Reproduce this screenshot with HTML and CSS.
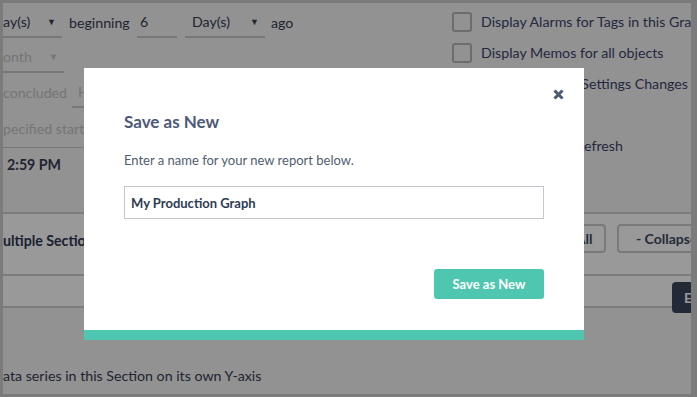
FILE: index.html
```html
<!DOCTYPE html>
<html lang="en">
<head>
  <meta charset="UTF-8">
  <title>Save as New</title>
  <link rel="stylesheet" href="styles.css">
</head>
<body>

  <div class="page">
    <div class="top">
      <div class="left">
        <div class="row row-first">
          <span class="select w-day1">ay(s) <i class="arrow">&#9660;</i></span>
          <span class="label l-begin">beginning</span>
          <span class="field w-num">6</span>
          <span class="select w-day2">Day(s) <i class="arrow">&#9660;</i></span>
          <span class="label l-ago">ago</span>
        </div>
        <div class="row faded">
          <span class="select w-month">onth <i class="arrow">&#9660;</i></span>
        </div>
        <div class="row faded">
          <span class="label">concluded</span>
          <span class="field w-hour">H</span>
        </div>
        <div class="row faded row-spec">
          <span class="label">pecified start</span>
        </div>
        <div class="row row-time">
          <span class="label strong">2:59 PM</span>
        </div>
      </div>
      <div class="right">
        <label class="check"><span class="box"></span>Display Alarms for Tags in this Graph</label>
        <label class="check"><span class="box"></span>Display Memos for all objects</label>
        <label class="check"><span class="box"></span>Display Process Settings Changes for Tags</label>
        <label class="check"><span class="box"></span>Show Legend</label>
        <label class="check"><span class="box"></span>Use Page Auto Refresh</label>
      </div>
    </div>

    <div class="section-bar">
      <span class="section-title">ultiple Sections</span>
      <div class="bar-buttons">
        <button class="btn-outline w-expand">+ Expand All</button>
        <button class="btn-outline w-collapse">- Collapse All</button>
      </div>
    </div>
    <div class="sub-bar">
      <button class="btn-dark">Edit</button>
    </div>
    <p class="axis-note">ata series in this Section on its own Y-axis</p>
  </div>

  <div class="backdrop">
    <div class="modal">
      <button class="close" aria-label="Close">
        <svg width="11" height="11" viewBox="0 0 11 11"><path d="M1.5 1.5 L9.5 9.5 M9.5 1.5 L1.5 9.5" stroke="#4b5a72" stroke-width="3"/></svg>
      </button>
      <div class="modal-body">
        <h3>Save as New</h3>
        <p>Enter a name for your new report below.</p>
        <input type="text" value="My Production Graph">
        <div class="modal-actions">
          <button class="btn-teal">Save as New</button>
        </div>
      </div>
    </div>
  </div>

</body>
</html>
```

FILE: styles.css
```css
body {
  margin: 0;
  background: #cdcdcd;
  font-family: "Lato", sans-serif;
  height: 397px;
  overflow: hidden;
}
.page {
  margin: 3px 6px 0 3px;
  height: 391px;
  background: #f3f3f3;
  overflow: hidden;
  color: #363c52;
  font-size: 14.2px;
}
.top {
  display: flex;
  height: 209px;
}
.left {
  flex: none;
  width: 415px;
  white-space: nowrap;
}
.right {
  padding-top: 3px;
  padding-left: 34px;
  white-space: nowrap;
  color: #3c4468;
}
.row {
  display: flex;
  align-items: center;
  height: 35px;
}
.row-first {
  margin-top: 2px;
}
.row-spec {
  height: 37px;
  border-bottom: 1px solid #c9c9c9;
}
.row-time {
  height: 32px;
  padding-left: 4px;
}
.select, .field {
  display: flex;
  align-items: center;
  height: 30px;
  border-bottom: 2px solid #c8c8c8;
  box-sizing: border-box;
  padding: 0 6px;
}
.select .arrow {
  font-style: normal;
  font-size: 9px;
  margin-left: auto;
}
.w-day1 { width: 59px; padding-left: 0; }
.l-begin { width: 61px; margin: 0 7px; }
.w-num { width: 40px; padding-left: 3px; }
.w-day2 { width: 80px; margin-left: 8px; padding-left: 7px; }
.l-ago { margin-left: 6px; }
.w-month { width: 61px; padding-left: 0; }
.w-hour { width: 40px; margin-left: 5px; }
.faded { color: #c4c4c4; }
.strong { font-weight: bold; }

.check {
  display: flex;
  align-items: center;
  height: 31px;
}
.box {
  width: 16px;
  height: 16px;
  border: 2px solid #b4b4b4;
  border-radius: 3px;
  margin-right: 9px;
}

.section-bar {
  display: flex;
  align-items: flex-start;
  justify-content: space-between;
  box-sizing: border-box;
  height: 64px;
  padding-top: 10px;
  background: #ffffff;
  border-top: 2px solid #cfcfcf;
  border-bottom: 2px solid #cfcfcf;
}
.section-title {
  font-weight: bold;
  line-height: 29px;
  padding-top: 2px;
  color: #2e3654;
}
.bar-buttons {
  display: flex;
  gap: 11px;
  margin-right: -46px;
}
.btn-outline {
  font-family: "Lato", sans-serif;
  font-weight: bold;
  font-size: 14px;
  color: #3e4a62;
  background: transparent;
  border: 2px solid #cbcbcb;
  border-radius: 4px;
  height: 29px;
  text-align: left;
  padding: 0 0 0 17px;
}
.w-expand { width: 110px; }
.w-collapse { width: 120px; }
.sub-bar {
  display: flex;
  justify-content: flex-end;
  height: 30px;
  background: #fff;
  border-bottom: 2px solid #cfcfcf;
}
.btn-dark {
  margin-top: 6px;
  margin-right: -41px;
  height: 31px;
  width: 60px;
  background: #38475a;
  color: #fff;
  border: none;
  border-radius: 4px;
  font-family: "Lato", sans-serif;
  font-weight: bold;
  font-size: 14px;
  text-align: left;
  padding-left: 12px;
  align-self: flex-start;
}
.axis-note {
  margin: 59px 0 0;
}

.backdrop {
  position: fixed;
  inset: 0;
  background: rgba(0, 0, 0, 0.4);
}
.modal {
  position: absolute;
  left: 84px;
  top: 68px;
  width: 500px;
  background: #fff;
  border-bottom: 10px solid #4fc6b0;
}
.close {
  position: absolute;
  right: 20px;
  top: 20px;
  border: none;
  background: none;
  padding: 0;
}
.modal-body {
  padding: 42px 40px 31px 40px;
}
.modal-body h3 {
  margin: 0;
  font-size: 17px;
  color: #4c5a78;
  line-height: 24px;
}
.modal-body p {
  margin: 18px 0 0;
  font-size: 13px;
  color: #4f5d74;
}
.modal-body input {
  display: block;
  box-sizing: border-box;
  width: 420px;
  height: 33px;
  margin-top: 18px;
  border: 1px solid #c3c6cd;
  padding: 0 6px;
  font-family: "Lato", sans-serif;
  font-weight: bold;
  font-size: 13px;
  color: #2e3b55;
}
.modal-actions {
  display: flex;
  justify-content: flex-end;
  margin-top: 50px;
}
.btn-teal {
  background: #4fc6b0;
  color: #fff;
  border: none;
  border-radius: 3px;
  width: 110px;
  height: 30px;
  font-family: "Lato", sans-serif;
  font-weight: bold;
  font-size: 13px;
}
```
